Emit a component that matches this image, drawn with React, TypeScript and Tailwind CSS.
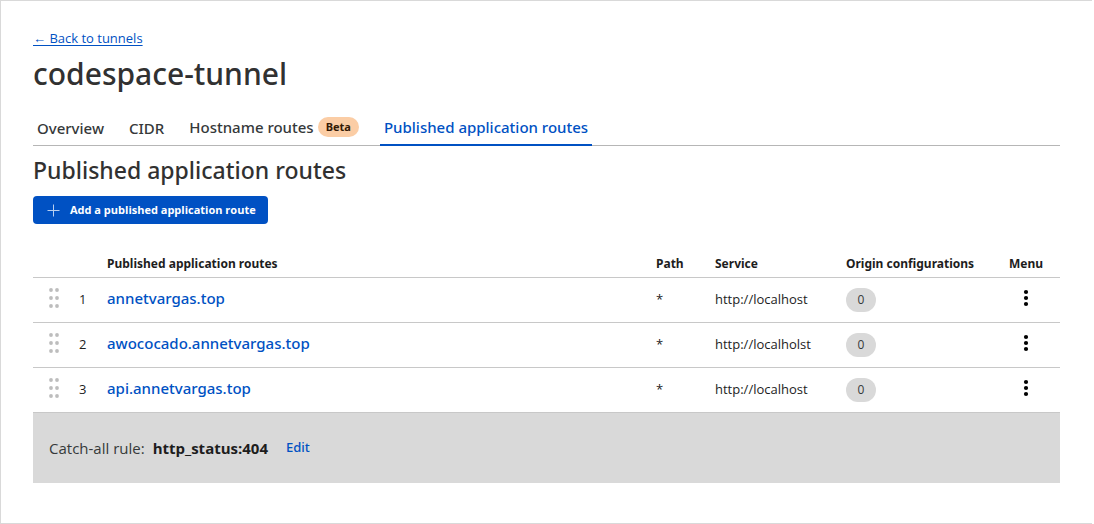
const routes = [
  { id: 1, host: 'annetvargas.top', service: 'http://localhost' },
  { id: 2, host: 'awococado.annetvargas.top', service: 'http://localholst' },
  { id: 3, host: 'api.annetvargas.top', service: 'http://localhost' },
];

function PlusIcon() {
  return (
    <svg width="13" height="13" viewBox="0 0 13 13" stroke="#b8cff0" aria-hidden="true">
      <path d="M6.5 0.5v12M0.5 6.5h12" strokeWidth="1" />
    </svg>
  );
}

function DragIcon() {
  return (
    <svg width="12" height="20" viewBox="0 0 12 20" fill="#bdbdbd" aria-hidden="true">
      {[2, 10, 18].map((y) => (
        <g key={y}>
          <circle cx="2" cy={y} r="1.9" />
          <circle cx="8" cy={y} r="1.9" />
        </g>
      ))}
    </svg>
  );
}

function KebabIcon() {
  return (
    <svg width="6" height="18" viewBox="0 0 6 18" fill="#000" aria-hidden="true">
      <circle cx="3" cy="3" r="2.1" />
      <circle cx="3" cy="9" r="2.1" />
      <circle cx="3" cy="15" r="2.1" />
    </svg>
  );
}

export default function App() {
  return (
    <div className="mr-0.5 min-h-screen border border-r-0 border-[#d9d9d9] bg-white pt-[27px] pr-8 pl-8 font-['Open_Sans','Noto_Sans',sans-serif] text-[13px] text-[#1d1d1d]">
      <a href="#tunnels" className="block w-fit leading-5 text-[#0051c3] underline underline-offset-2">
        ← Back to tunnels
      </a>
      <h1 className="mt-1.5 font-['Noto_Sans',sans-serif] text-[30px] leading-10 font-medium text-[#313131]">codespace-tunnel</h1>

      <nav className="mt-[21px] flex h-[31px] items-start gap-[17px] border-b border-[#b6b6b6] font-['Noto_Sans',sans-serif] text-[15px] leading-6 font-medium text-[#36393a]">
        <a href="#overview" className="px-1 pt-px">Overview</a>
        <a href="#cidr" className="px-1 pt-px">CIDR</a>
        <a href="#hostname" className="flex items-center gap-1 px-1">
          Hostname routes
          <span className="rounded-full bg-[#fbcda5] px-2 text-[11px] leading-5 font-bold text-[#341a04]">Beta</span>
        </a>
        <a href="#published" aria-current="page" className="h-[31px] border-b-2 border-[#0051c3] px-1 text-[#0051c3]">
          Published application routes
        </a>
      </nav>

      <h2 className="mt-1.5 font-['Noto_Sans',sans-serif] text-[23px] leading-9 font-medium text-[#313131]">Published application routes</h2>
      <button type="button" className="mt-2 flex h-7 items-center gap-2.5 rounded-sm bg-[#0051c3] pr-3 pl-3.5 text-[11px] font-bold text-white">
        <PlusIcon />
        Add a published application route
      </button>

      <table className="mt-[23px] w-full table-fixed border-collapse text-left">
        <colgroup>
          <col className="w-[46px]" />
          <col className="w-7" />
          <col />
          <col className="w-[59px]" />
          <col className="w-[131px]" />
          <col className="w-[163px]" />
          <col className="w-[51px]" />
        </colgroup>
        <thead>
          <tr className="h-[30px] border-b border-[#c8c8c8] font-['Noto_Sans',sans-serif] text-xs">
            <td />
            <td />
            <th scope="col" className="pt-1 font-bold">Published application routes</th>
            <th scope="col" className="pt-1 font-bold">Path</th>
            <th scope="col" className="pt-1 font-bold">Service</th>
            <th scope="col" className="pt-1 font-bold">Origin configurations</th>
            <th scope="col" className="pt-1 font-bold">Menu</th>
          </tr>
        </thead>
        <tbody>
          {routes.map((route) => (
            <tr key={route.id} className="h-[45px] border-b border-[#c8c8c8]">
              <td>
                <button type="button" aria-label={`Reorder ${route.host}`} className="ml-4 block pb-1">
                  <DragIcon />
                </button>
              </td>
              <td>{route.id}</td>
              <td className="pb-0.5">
                <a href={`#${route.host}`} className="font-['Noto_Sans',sans-serif] text-[15px] font-medium text-[#0051c3]">{route.host}</a>
              </td>
              <td>*</td>
              <td>{route.service}</td>
              <td>
                <span className="flex h-6 w-[30px] items-center justify-center rounded-full bg-[#d9d9d9] text-xs text-[#36393a]">0</span>
              </td>
              <td>
                <button type="button" aria-label={`Menu for ${route.host}`} className="flex w-[34px] justify-center pb-1">
                  <KebabIcon />
                </button>
              </td>
            </tr>
          ))}
        </tbody>
      </table>
      <div className="flex h-[70px] items-center bg-[#d9d9d9] px-4 pt-0.5 text-[15px] text-[#36393a]">
        <span>Catch-all rule:</span>
        <strong className="ml-2 font-bold text-[#1d1d1d]">http_status:404</strong>
        <button type="button" className="ml-[18px] pb-0.5 font-['Noto_Sans',sans-serif] text-[13px] font-medium text-[#0051c3]">Edit</button>
      </div>
    </div>
  );
}
